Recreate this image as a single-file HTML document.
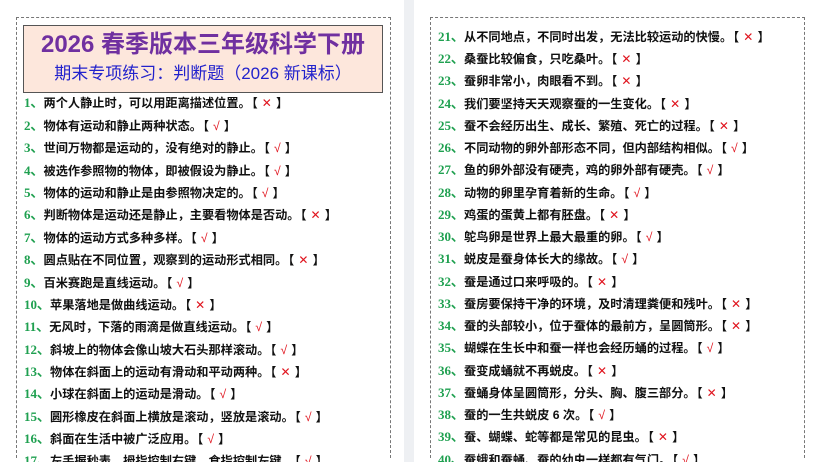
<!DOCTYPE html>
<html><head><meta charset="utf-8"><style>
html,body{margin:0;width:817px;height:462px;overflow:hidden;}
body{background:#eef0f3;position:relative;font-family:"Liberation Sans","Noto Sans CJK SC",sans-serif;}
.page{position:absolute;top:0;height:462px;background:#fff;}
.box{position:absolute;top:17px;height:440px;border:1px dashed #777;border-bottom:none;}
.title{position:absolute;left:23px;top:25px;width:358px;height:66px;background:#fde7dc;border:1px solid #555;text-align:center;}
.t1{color:#7030a0;font-size:24px;font-weight:bold;margin-top:4px;line-height:30px;}
.t2{color:#2222cc;font-size:17px;margin-top:2px;line-height:24px;}
.r{position:absolute;font-size:12.2px;font-weight:bold;color:#111;white-space:nowrap;line-height:14px;}
.n{color:#1fa050;font-family:"Liberation Serif",serif;font-weight:bold;font-size:13px;}
.x,.v{color:#e0141e;font-weight:normal;padding:0 3px;}
.b{font-family:"Noto Sans CJK SC",sans-serif;padding:0 1px;}
</style></head><body>
<div class="page" style="left:0;width:404px"></div>
<div class="page" style="left:414px;width:403px"></div>
<div class="box" style="left:16px;width:373px"></div>
<div class="box" style="left:430px;width:373px"></div>
<div class="title"><div class="t1">2026 春季版本三年级科学下册</div><div class="t2">期末专项练习：判断题（2026 新课标）</div></div>

<div class="r" style="left:24px;top:95px"><span class="n">1、</span>两个人静止时，可以用距离描述位置。<span class="b">【</span><span class="x">✕</span><span class="b">】</span></div>
<div class="r" style="left:24px;top:118px"><span class="n">2、</span>物体有运动和静止两种状态。<span class="b">【</span><span class="v">√</span><span class="b">】</span></div>
<div class="r" style="left:24px;top:140px"><span class="n">3、</span>世间万物都是运动的，没有绝对的静止。<span class="b">【</span><span class="v">√</span><span class="b">】</span></div>
<div class="r" style="left:24px;top:163px"><span class="n">4、</span>被选作参照物的物体，即被假设为静止。<span class="b">【</span><span class="v">√</span><span class="b">】</span></div>
<div class="r" style="left:24px;top:185px"><span class="n">5、</span>物体的运动和静止是由参照物决定的。<span class="b">【</span><span class="v">√</span><span class="b">】</span></div>
<div class="r" style="left:24px;top:207px"><span class="n">6、</span>判断物体是运动还是静止，主要看物体是否动。<span class="b">【</span><span class="x">✕</span><span class="b">】</span></div>
<div class="r" style="left:24px;top:230px"><span class="n">7、</span>物体的运动方式多种多样。<span class="b">【</span><span class="v">√</span><span class="b">】</span></div>
<div class="r" style="left:24px;top:252px"><span class="n">8、</span>圆点贴在不同位置，观察到的运动形式相同。<span class="b">【</span><span class="x">✕</span><span class="b">】</span></div>
<div class="r" style="left:24px;top:275px"><span class="n">9、</span>百米赛跑是直线运动。<span class="b">【</span><span class="v">√</span><span class="b">】</span></div>
<div class="r" style="left:24px;top:297px"><span class="n">10、</span>苹果落地是做曲线运动。<span class="b">【</span><span class="x">✕</span><span class="b">】</span></div>
<div class="r" style="left:24px;top:319px"><span class="n">11、</span>无风时，下落的雨滴是做直线运动。<span class="b">【</span><span class="v">√</span><span class="b">】</span></div>
<div class="r" style="left:24px;top:342px"><span class="n">12、</span>斜坡上的物体会像山坡大石头那样滚动。<span class="b">【</span><span class="v">√</span><span class="b">】</span></div>
<div class="r" style="left:24px;top:364px"><span class="n">13、</span>物体在斜面上的运动有滑动和平动两种。<span class="b">【</span><span class="x">✕</span><span class="b">】</span></div>
<div class="r" style="left:24px;top:386px"><span class="n">14、</span>小球在斜面上的运动是滑动。<span class="b">【</span><span class="v">√</span><span class="b">】</span></div>
<div class="r" style="left:24px;top:409px"><span class="n">15、</span>圆形橡皮在斜面上横放是滚动，竖放是滚动。<span class="b">【</span><span class="v">√</span><span class="b">】</span></div>
<div class="r" style="left:24px;top:431px"><span class="n">16、</span>斜面在生活中被广泛应用。<span class="b">【</span><span class="v">√</span><span class="b">】</span></div>
<div class="r" style="left:24px;top:453px"><span class="n">17、</span>左手握秒表，拇指控制右键，食指控制左键。<span class="b">【</span><span class="v">√</span><span class="b">】</span></div>

<div class="r" style="left:438px;top:29px"><span class="n">21、</span>从不同地点，不同时出发，无法比较运动的快慢。<span class="b">【</span><span class="x">✕</span><span class="b">】</span></div>
<div class="r" style="left:438px;top:51px"><span class="n">22、</span>桑蚕比较偏食，只吃桑叶。<span class="b">【</span><span class="x">✕</span><span class="b">】</span></div>
<div class="r" style="left:438px;top:73px"><span class="n">23、</span>蚕卵非常小，肉眼看不到。<span class="b">【</span><span class="x">✕</span><span class="b">】</span></div>
<div class="r" style="left:438px;top:96px"><span class="n">24、</span>我们要坚持天天观察蚕的一生变化。<span class="b">【</span><span class="x">✕</span><span class="b">】</span></div>
<div class="r" style="left:438px;top:118px"><span class="n">25、</span>蚕不会经历出生、成长、繁殖、死亡的过程。<span class="b">【</span><span class="x">✕</span><span class="b">】</span></div>
<div class="r" style="left:438px;top:140px"><span class="n">26、</span>不同动物的卵外部形态不同，但内部结构相似。<span class="b">【</span><span class="v">√</span><span class="b">】</span></div>
<div class="r" style="left:438px;top:162px"><span class="n">27、</span>鱼的卵外部没有硬壳，鸡的卵外部有硬壳。<span class="b">【</span><span class="v">√</span><span class="b">】</span></div>
<div class="r" style="left:438px;top:185px"><span class="n">28、</span>动物的卵里孕育着新的生命。<span class="b">【</span><span class="v">√</span><span class="b">】</span></div>
<div class="r" style="left:438px;top:207px"><span class="n">29、</span>鸡蛋的蛋黄上都有胚盘。<span class="b">【</span><span class="x">✕</span><span class="b">】</span></div>
<div class="r" style="left:438px;top:229px"><span class="n">30、</span>鸵鸟卵是世界上最大最重的卵。<span class="b">【</span><span class="v">√</span><span class="b">】</span></div>
<div class="r" style="left:438px;top:251px"><span class="n">31、</span>蜕皮是蚕身体长大的缘故。<span class="b">【</span><span class="v">√</span><span class="b">】</span></div>
<div class="r" style="left:438px;top:274px"><span class="n">32、</span>蚕是通过口来呼吸的。<span class="b">【</span><span class="x">✕</span><span class="b">】</span></div>
<div class="r" style="left:438px;top:296px"><span class="n">33、</span>蚕房要保持干净的环境，及时清理粪便和残叶。<span class="b">【</span><span class="x">✕</span><span class="b">】</span></div>
<div class="r" style="left:438px;top:318px"><span class="n">34、</span>蚕的头部较小，位于蚕体的最前方，呈圆筒形。<span class="b">【</span><span class="x">✕</span><span class="b">】</span></div>
<div class="r" style="left:438px;top:340px"><span class="n">35、</span>蝴蝶在生长中和蚕一样也会经历蛹的过程。<span class="b">【</span><span class="v">√</span><span class="b">】</span></div>
<div class="r" style="left:438px;top:363px"><span class="n">36、</span>蚕变成蛹就不再蜕皮。<span class="b">【</span><span class="x">✕</span><span class="b">】</span></div>
<div class="r" style="left:438px;top:385px"><span class="n">37、</span>蚕蛹身体呈圆筒形，分头、胸、腹三部分。<span class="b">【</span><span class="x">✕</span><span class="b">】</span></div>
<div class="r" style="left:438px;top:407px"><span class="n">38、</span>蚕的一生共蜕皮 6 次。<span class="b">【</span><span class="v">√</span><span class="b">】</span></div>
<div class="r" style="left:438px;top:429px"><span class="n">39、</span>蚕、蝴蝶、蛇等都是常见的昆虫。<span class="b">【</span><span class="x">✕</span><span class="b">】</span></div>
<div class="r" style="left:438px;top:452px"><span class="n">40、</span>蚕蛾和蚕蛹、蚕的幼虫一样都有气门。<span class="b">【</span><span class="v">√</span><span class="b">】</span></div>
</body></html>
